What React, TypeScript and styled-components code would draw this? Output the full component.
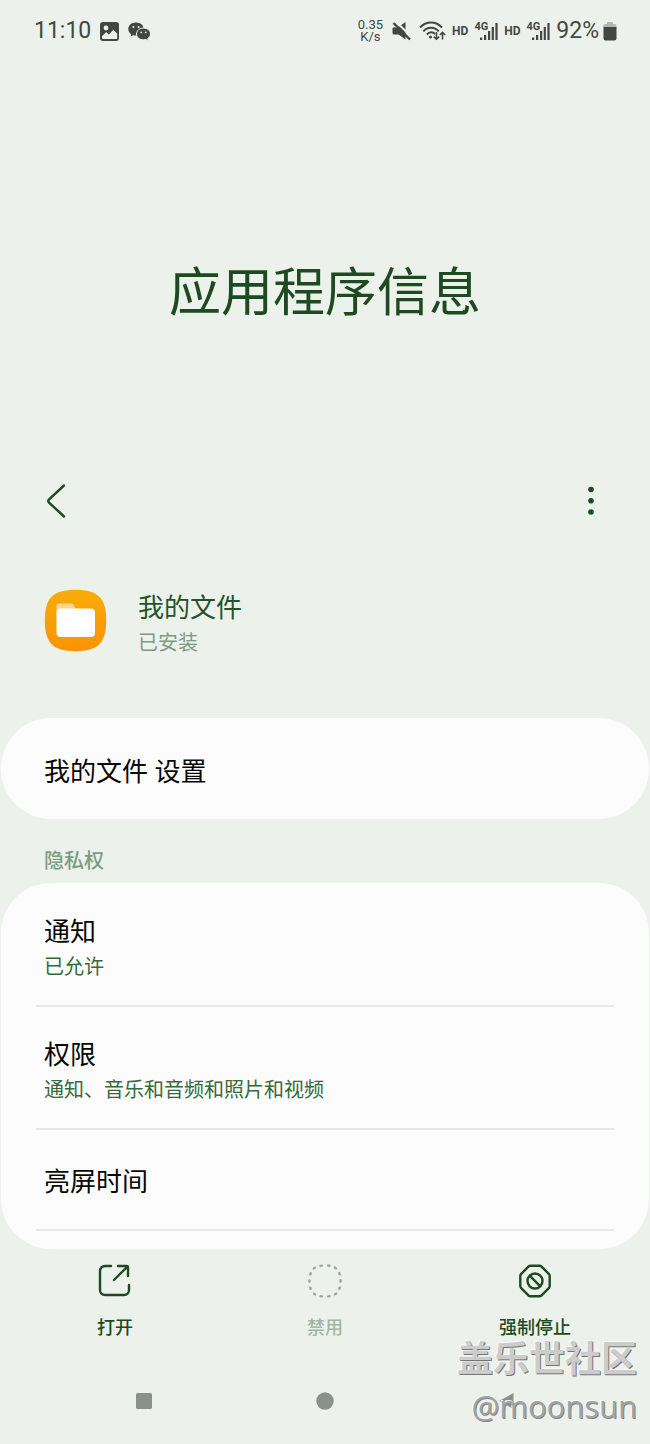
import React from "react";
import styled, { createGlobalStyle } from "styled-components";

const sans = `Roboto, "Noto Sans CJK SC", sans-serif`;
const ink = "#1d4a20";
const statusInk = "#434744";

const GlobalStyle = createGlobalStyle`
  * { box-sizing: border-box; }
  body { margin: 0; background: #ecf1ec; font-family: ${sans}; }
  h1, h2, p { margin: 0; font-weight: 400; }
  button { font: inherit; color: inherit; border: 0; background: none; padding: 0; cursor: pointer; }
  svg { display: block; flex: none; }
`;

const Page = styled.div`
  position: relative;
  min-height: 100vh;
  display: flex;
  flex-direction: column;
  background: #ecf1ec;
`;

const StatusBar = styled.header`
  display: flex;
  justify-content: space-between;
  align-items: center;
  height: 62px;
  padding: 0 33px 0 34px;
  color: ${statusInk};
`;

const StatusGroup = styled.div<{ $gap: number }>`
  display: flex;
  align-items: center;
  gap: ${(p) => p.$gap}px;
`;

const StatusText = styled.span`
  font-size: 23px;
  line-height: 28px;
`;

const BatteryLevel = styled.span`
  display: flex;
  align-items: center;
  gap: 4px;
  font-size: 23px;
  line-height: 28px;
`;

const NetSpeed = styled.span`
  display: flex;
  flex-direction: column;
  align-items: center;
  margin-right: 3px;
  font-size: 13px;
  line-height: 12px;
`;

const HdTag = styled.span`
  font-size: 12px;
  line-height: 14px;
  font-weight: 700;
`;

const Signal = styled.span`
  display: flex;
  align-items: flex-start;
  font-size: 11px;
  line-height: 12px;
  font-weight: 700;
  svg { margin-left: -8px; }
`;

const Hero = styled.div`
  padding: 198px 24px 137px;
  text-align: center;
`;

const PageTitle = styled.h1`
  font-size: 52px;
  line-height: 68px;
  color: ${ink};
`;

const Toolbar = styled.nav`
  display: flex;
  justify-content: space-between;
  align-items: center;
  height: 72px;
  padding: 0 35px 0 32px;
`;

const IconButton = styled.button`
  display: grid;
  place-items: center;
  width: 48px;
  height: 48px;
`;

const AppSummary = styled.section`
  display: flex;
  align-items: center;
  gap: 31px;
  padding: 45px 44px 59px;
`;

const AppText = styled.div`
  padding-top: 7px;
`;

const AppName = styled.h2`
  font-size: 26px;
  line-height: 38px;
  color: #23522a;
`;

const AppState = styled.p`
  font-size: 20px;
  line-height: 32px;
  color: #809a82;
`;

const Card = styled.section<{ $list?: boolean }>`
  margin: 0 1px;
  padding: ${(p) => (p.$list ? "1px 35px 18px" : "0 35px")};
  border-radius: 50px;
  background: #fcfcfc;
`;

const Row = styled.button<{ $divided?: boolean }>`
  display: block;
  width: 100%;
  padding: 28px 8px 23px;
  text-align: left;
  border-bottom: ${(p) => (p.$divided ? "2px solid #e6e7e6" : "0")};
`;

const SingleRow = styled(Row)`
  padding: ${(p) => (p.$divided ? "32px 8px 27px" : "34px 8px 27px")};
`;

const RowTitle = styled.span`
  display: block;
  font-size: 26px;
  line-height: 40px;
  color: #060606;
`;

const RowDetail = styled.span`
  display: block;
  font-size: 20px;
  line-height: 30px;
  color: #356a3a;
`;

const SectionLabel = styled.h2`
  padding: 28px 44px 8px;
  font-size: 20px;
  line-height: 28px;
  font-weight: 500;
  color: #7c9c80;
`;

const ActionBar = styled.footer`
  display: grid;
  grid-template-columns: repeat(3, 1fr);
  padding: 15px 10px 17px;
`;

const Action = styled.button`
  display: flex;
  flex-direction: column;
  align-items: center;
  gap: 17px;
  font-size: 18px;
  line-height: 26px;
  font-weight: 500;
  color: ${ink};
  &:disabled { color: #a3b5a4; cursor: default; }
`;

const NavBar = styled.nav`
  display: grid;
  grid-template-columns: repeat(3, 1fr);
  height: 86px;
  margin-top: auto;
  padding: 0 54px;
`;

const NavButton = styled.button`
  display: grid;
  place-items: center;
`;

const Watermark = styled.div`
  position: absolute;
  right: 13px;
  bottom: 15px;
  text-align: right;
  pointer-events: none;
`;

const WatermarkName = styled.div`
  font-size: 36px;
  line-height: 46px;
  font-weight: 700;
  color: #cbcccb;
  text-shadow: 1px 1px 0 #747674, -1px -1px 0 #fafafa;
`;

const WatermarkUser = styled.div`
  font-family: "Open Sans", "Noto Sans", sans-serif;
  font-size: 31px;
  line-height: 46px;
  color: #a2a4a2;
  text-shadow: 1px 1px 0 #868886, -1px -1px 0 #fafafa;
`;

const PictureIcon = () => (
  <svg width="19" height="19" viewBox="0 0 19 19">
    <rect width="19" height="19" rx="3" fill={statusInk} />
    <circle cx="6" cy="6" r="2.4" fill="#ecf1ec" />
    <path d="M2 14.2 6.2 10l2.6 2.4 4.6-4.6 3.8 4v4.2a1 1 0 0 1-1 1H3a1 1 0 0 1-1-1z" fill="#ecf1ec" />
  </svg>
);

const ChatIcon = () => (
  <svg width="23" height="19" viewBox="0 0 23 19">
    <path d="M8 .5C3.600.5.3 3.300.3 7c0 2.200 1.100 4 2.900 5.200L2.500 14.600l2.800-1.400c.9.300 1.800.400 2.700.400 4.400 0 7.700-2.900 7.700-6.600S12.400.5 8 .5z" fill={statusInk} />
    <path d="M15.500 6.100c-4 0-7 2.500-7 5.900s3 5.800 7 5.800c.8 0 1.600-.1 2.300-.3l2.500 1.300-.6-2.200c1.700-1.100 2.800-2.700 2.800-4.600 0-3.400-3-5.900-7-5.900z" fill={statusInk} stroke="#ecf1ec" strokeWidth="1" />
    <g fill="#ecf1ec">
      <circle cx="5.400" cy="5" r="1" /><circle cx="10.600" cy="5" r="1" />
      <circle cx="13.200" cy="10.300" r=".9" /><circle cx="17.700" cy="10.300" r=".9" />
    </g>
  </svg>
);

const MuteIcon = () => (
  <svg width="21" height="20" viewBox="0 0 21 20">
    <path d="M.5 7.500a1 1 0 0 1 1-1H6L13.500 1v17.500L6.500 13.500H2A1.500 1.500 0 0 1 .5 12z" fill={statusInk} />
    <path d="M3.500 0 20 16.500" stroke="#ecf1ec" strokeWidth="2" />
    <path d="M1.500 2 18 18.500" stroke={statusInk} strokeWidth="2.400" />
  </svg>
);

const WifiIcon = () => (
  <svg width="27" height="20" viewBox="0 0 27 20" fill="none" stroke={statusInk} strokeWidth="2">
    <path d="M1 6.500C7-.3 17-.3 23 6.500M4.300 10.300c4.300-4.800 11.100-4.800 15.400 0M7.800 13.500c2.600-2.800 6-2.800 8.400-.4" />
    <circle cx="11.500" cy="16" r="1.500" fill={statusInk} stroke="none" />
    <path d="M17.500 11v7M14.800 15.600l2.700 2.700 2.700-2.700M23.500 18.500v-7M20.800 14l2.700-2.700L26.200 14" strokeWidth="1.500" />
  </svg>
);

const SignalBars = () => (
  <svg width="18" height="20" viewBox="0 0 18 20" fill={statusInk}>
    <rect x="0" y="16.500" width="2.200" height="2.500" />
    <rect x="4" y="14" width="2.200" height="5" />
    <rect x="8" y="10" width="2.200" height="9" />
    <rect x="11.700" y="6" width="2.200" height="13" />
    <rect x="15.400" y="2" width="2.200" height="17" />
  </svg>
);

const BatteryIcon = () => (
  <svg width="14" height="20" viewBox="0 0 14 20">
    <path d="M4 1h6v2h2a1.500 1.500 0 0 1 1.500 1.500V7H.5V4.500A1.500 1.500 0 0 1 2 3h2z" fill="#b3b7b3" />
    <path d="M.5 6h13v11.500a2 2 0 0 1-2 2h-9a2 2 0 0 1-2-2z" fill={statusInk} />
  </svg>
);

const BackIcon = () => (
  <svg width="20" height="34" viewBox="0 0 20 34" fill="none" stroke={ink} strokeWidth="2.400" strokeLinecap="round" strokeLinejoin="round">
    <path d="M18 1.500 2.800 15.700a1.800 1.800 0 0 0 0 2.600L18 32.500" />
  </svg>
);

const MoreIcon = () => (
  <svg width="6" height="30" viewBox="0 0 6 30" fill={ink}>
    <circle cx="3" cy="3.500" r="2.800" /><circle cx="3" cy="14.800" r="2.800" /><circle cx="3" cy="26" r="2.800" />
  </svg>
);

const FilesIcon = () => (
  <svg width="63" height="63" viewBox="0 0 63 63">
    <defs>
      <linearGradient id="files" x1="0" y1="0" x2="0" y2="1">
        <stop offset="0" stopColor="#f8ac08" /><stop offset="1" stopColor="#fa9305" />
      </linearGradient>
    </defs>
    <path d="M31.500.8C54 .8 62.200 9 62.200 31.500S54 62.200 31.500 62.200.8 54 .8 31.500 9 .8 31.500.8z" fill="url(#files)" />
    <path d="M12.500 26V17a2.500 2.500 0 0 1 2.500-2.500h12.500a2.500 2.500 0 0 1 2.300 1.600l2 4.900V26z" fill="#ffd592" />
    <rect x="12.500" y="19.500" width="38.500" height="28.500" rx="4" fill="#fff" />
  </svg>
);

const OpenIcon = () => (
  <svg width="34" height="34" viewBox="0 0 34 34" fill="none" stroke="currentColor" strokeWidth="2.400" strokeLinecap="round" strokeLinejoin="round">
    <path d="M13 2H7a5 5 0 0 0-5 5v19a5 5 0 0 0 5 5h19a5 5 0 0 0 5-5v-5" />
    <path d="M20 2h8.500a1.500 1.500 0 0 1 1.500 1.500V12M29.500 2.500 16 16" />
  </svg>
);

const DisableIcon = () => (
  <svg width="34" height="34" viewBox="0 0 34 34" fill="none" stroke="#9aa79b" strokeWidth="2.400" strokeLinecap="round">
    <path d="M17 1.500C28 1.500 32.500 6 32.500 17S28 32.500 17 32.500 1.500 28 1.500 17 6 1.500 17 1.500z" pathLength="140" strokeDasharray="1.800 8.200" strokeDashoffset="-4" />
  </svg>
);

const StopIcon = () => (
  <svg width="34" height="34" viewBox="0 0 34 34" fill="none" stroke="currentColor" strokeWidth="2.400" strokeLinejoin="round">
    <path d="M12.500 1.800h9a3 3 0 0 1 2.100.9l7.200 7.200a3 3 0 0 1 .9 2.100v10a3 3 0 0 1-.9 2.100l-7.200 7.200a3 3 0 0 1-2.100.9h-9a3 3 0 0 1-2.100-.9l-7.200-7.200a3 3 0 0 1-.9-2.100V12a3 3 0 0 1 .9-2.100l7.200-7.200a3 3 0 0 1 2.100-.9z" />
    <circle cx="17" cy="17" r="7.500" />
    <path d="M11.700 11.700 22.300 22.300" />
  </svg>
);

const MobileSignal = () => (
  <>
    <HdTag>HD</HdTag>
    <Signal>4G<SignalBars /></Signal>
  </>
);

const permissionRows = [
  { title: "通知", detail: "已允许" },
  { title: "权限", detail: "通知、音乐和音频和照片和视频" },
];

export default function App() {
  return (
    <Page>
      <GlobalStyle />
      <StatusBar>
        <StatusGroup $gap={9}>
          <StatusText>11:10</StatusText>
          <PictureIcon />
          <ChatIcon />
        </StatusGroup>
        <StatusGroup $gap={6}>
          <NetSpeed><span>0.35</span><span>K/s</span></NetSpeed>
          <MuteIcon />
          <WifiIcon />
          <MobileSignal />
          <MobileSignal />
          <BatteryLevel>92%<BatteryIcon /></BatteryLevel>
        </StatusGroup>
      </StatusBar>

      <Hero><PageTitle>应用程序信息</PageTitle></Hero>

      <Toolbar>
        <IconButton aria-label="返回"><BackIcon /></IconButton>
        <IconButton aria-label="更多选项"><MoreIcon /></IconButton>
      </Toolbar>

      <main>
        <AppSummary>
          <FilesIcon />
          <AppText>
            <AppName>我的文件</AppName>
            <AppState>已安装</AppState>
          </AppText>
        </AppSummary>

        <Card>
          <SingleRow><RowTitle>我的文件 设置</RowTitle></SingleRow>
        </Card>

        <SectionLabel>隐私权</SectionLabel>
        <Card $list>
          {permissionRows.map((row) => (
            <Row key={row.title} $divided>
              <RowTitle>{row.title}</RowTitle>
              <RowDetail>{row.detail}</RowDetail>
            </Row>
          ))}
          <SingleRow $divided><RowTitle>亮屏时间</RowTitle></SingleRow>
        </Card>
      </main>

      <ActionBar>
        <Action><OpenIcon />打开</Action>
        <Action disabled><DisableIcon />禁用</Action>
        <Action><StopIcon />强制停止</Action>
      </ActionBar>

      <NavBar>
        <NavButton aria-label="最近">
          <svg width="16" height="16"><rect width="16" height="16" rx="1.500" fill="#8a918b" /></svg>
        </NavButton>
        <NavButton aria-label="主页">
          <svg width="18" height="18"><circle cx="9" cy="9" r="8.700" fill="#8a918b" /></svg>
        </NavButton>
        <NavButton aria-label="后退">
          <svg width="16" height="18"><path d="M15.500 1v16L1 9z" fill="#8a918b" /></svg>
        </NavButton>
      </NavBar>

      <Watermark>
        <WatermarkName>盖乐世社区</WatermarkName>
        <WatermarkUser>@moonsun</WatermarkUser>
      </Watermark>
    </Page>
  );
}
